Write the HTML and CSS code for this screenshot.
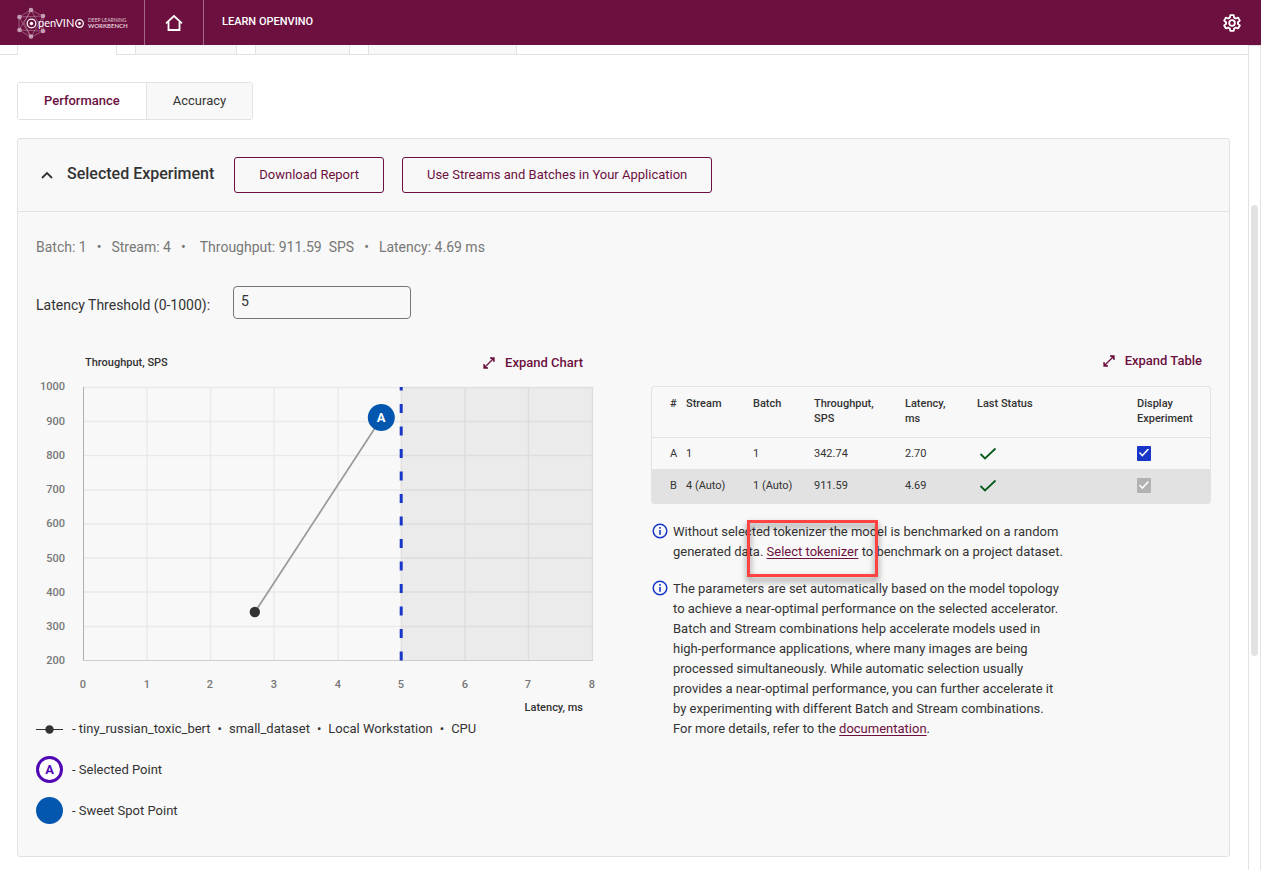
FILE: index.html
```html
<!DOCTYPE html>
<html lang="en">
<head>
<meta charset="utf-8">
<title>OpenVINO Deep Learning Workbench</title>
<link rel="stylesheet" href="styles.css">
</head>
<body>
<header class="topbar">
  <a class="brand" href="#" aria-label="OpenVINO Deep Learning Workbench">
    <svg width="112" height="32" viewBox="16 6 112 32">
      <g class="mesh" fill="none">
        <path d="M31 9 19 16V29L31 36 43 30V15ZM31 9 24 22 31 36M31 9 43 30M19 16 31 36 43 15M19 29 31 9M19 29 43 30M19 16 43 15"/>
      </g>
      <g class="mesh-node">
        <circle cx="31" cy="9" r="2.300"/><circle cx="19.500" cy="16" r="2.300"/><circle cx="19.500" cy="29" r="2.300"/><circle cx="31" cy="35.500" r="2.300"/><circle cx="43" cy="30" r="2.300"/><circle cx="43" cy="15" r="2.300"/>
      </g>
      <circle cx="31.500" cy="22.500" r="4.300" class="ring"/><circle cx="31.500" cy="22.500" r="1.700" fill="#fff"/>
      <text x="38" y="26" class="logo-name">penVIN</text>
      <circle cx="79.500" cy="22.500" r="3.800" class="ring"/><circle cx="79.500" cy="22.500" r="1.400" fill="#fff"/>
      <text x="88" y="21" class="logo-sub">DEEP LEARNING</text>
      <text x="88" y="27" class="logo-sub strong">WORKBENCH</text>
    </svg>
  </a>
  <a class="home" href="#" aria-label="Home">
    <svg width="20" height="18" viewBox="0 0 20 18"><path d="M2 9.300 10 2l8 7.300M4.500 8v8h11V8" fill="none" stroke="#fff" stroke-width="1.800"/></svg>
  </a>
  <a class="learn" href="#">LEARN OPENVINO</a>
  <button class="settings" aria-label="Settings">
    <svg width="20" height="20" viewBox="0 0 24 24" fill="none" stroke="#fff" stroke-width="2.200" stroke-linejoin="round"><path d="M10 2.500h4l.6 3 1.900 1.100 2.900-1 2 3.500-2.300 2v1.900l2.300 2-2 3.500-2.900-1-1.900 1.100-.6 2.900h-4l-.6-2.900-1.900-1.100-2.900 1-2-3.500 2.300-2v-1.900l-2.300-2 2-3.500 2.900 1 1.900-1.100z"/><circle cx="12" cy="12" r="3.400"/></svg>
  </button>
</header>
<div class="shell">
  <main class="content">
    <div class="stages" aria-hidden="true">
      <span class="line lead"></span><span class="stage current"></span><span class="line"></span><span class="stage s2"></span><span class="line"></span><span class="stage s3"></span><span class="line"></span><span class="stage s4"></span><span class="line rest"></span>
    </div>
    <div class="tabs" role="tablist">
      <button class="tab active" role="tab" aria-selected="true">Performance</button>
      <button class="tab" role="tab" aria-selected="false">Accuracy</button>
    </div>
    <section class="panel">
      <div class="panel-head">
        <button class="toggle" aria-label="Collapse">
          <svg width="12" height="8" viewBox="0 0 12 8"><path d="M1 7l5-5 5 5" fill="none" stroke="#333" stroke-width="1.800"/></svg>
        </button>
        <h2>Selected Experiment</h2>
        <button class="outline">Download Report</button>
        <button class="outline">Use Streams and Batches in Your Application</button>
      </div>
      <div class="panel-body">
        <div class="stats"><span>Batch: 1</span><span>•</span><span>Stream: 4</span><span>•</span><span class="through">Throughput: 911.59&nbsp; SPS</span><span>•</span><span>Latency: 4.69 ms</span></div>
        <div class="threshold">
          <label for="latency">Latency Threshold (0-1000):</label>
          <input id="latency" type="text" value="5">
        </div>
        <div class="columns">
          <div class="chart-col">
            <div class="chart-head">
              <span class="axis-title">Throughput, SPS</span>
              <button class="expand"><svg width="12" height="12" viewBox="0 0 12 12"><path d="M2 10l8-8M7 1h4v4M1 7v4h4" fill="none" stroke="#6c103f" stroke-width="1.300"/><path d="M7.500 1H11v3.500zM1 7.500V11h3.500z" fill="#6c103f"/></svg>Expand Chart</button>
            </div>
            <svg class="chart" viewBox="0 0 560 320" role="img" aria-label="Throughput against latency">
              <rect x="365" y="12" width="192" height="274" fill="#ebebeb"/>
              <path class="grid" d="M47 12.500H557M47 46.500H557M47 80.500H557M47 115H557M47 149H557M47 183H557M47 217H557M47 251.500H557M111 12V285M174.500 12V285M238 12V285M302 12V285M365 12V285M429 12V285M492.500 12V285M556.500 12V285"/>
              <path class="axis-y" d="M47.500 12V286"/><path class="axis-x" d="M47 285.500H557"/>
              <path d="M219 237 345.500 43" stroke="#999" stroke-width="1.700"/>
              <path d="M365.200 285.500V12" stroke="#1836c8" stroke-width="3" stroke-dasharray="9 13.500"/>
              <circle cx="218.800" cy="237" r="5.200" fill="#333"/>
              <circle cx="345.300" cy="42.500" r="13.500" fill="#0457ae"/>
              <text x="345" y="47" class="point">A</text>
              <g class="tick end">
                <text x="29" y="15">1000</text><text x="29" y="50">900</text><text x="29" y="84">800</text><text x="29" y="118">700</text><text x="29" y="152">600</text><text x="29" y="187">500</text><text x="29" y="221">400</text><text x="29" y="255">300</text><text x="29" y="289">200</text>
              </g>
              <g class="tick mid">
                <text x="47" y="313">0</text><text x="111" y="313">1</text><text x="174" y="313">2</text><text x="238" y="313">3</text><text x="302" y="313">4</text><text x="365" y="313">5</text><text x="429" y="313">6</text><text x="492" y="313">7</text><text x="556" y="313">8</text>
              </g>
            </svg>
            <div class="x-title axis-title">Latency, ms</div>
            <ul class="legend">
              <li><svg width="27" height="10" viewBox="0 0 27 10"><path d="M0 5.500h27" stroke="#333"/><circle cx="13.500" cy="5.500" r="4.200" fill="#333"/></svg><span class="names"><span>- tiny_russian_toxic_bert</span><span>•</span><span>small_dataset</span><span>•</span><span>Local Workstation</span><span>•</span><span>CPU</span></span></li>
              <li><span class="dot selected">A</span><span>- Selected Point</span></li>
              <li><span class="dot sweet"></span><span>- Sweet Spot Point</span></li>
            </ul>
          </div>
          <div class="table-col">
            <div class="table-head">
              <button class="expand"><svg width="12" height="12" viewBox="0 0 12 12"><path d="M2 10l8-8M7 1h4v4M1 7v4h4" fill="none" stroke="#6c103f" stroke-width="1.300"/><path d="M7.500 1H11v3.500zM1 7.500V11h3.500z" fill="#6c103f"/></svg>Expand Table</button>
            </div>
            <div class="table-wrap">
            <table>
              <colgroup><col class="c-id"><col class="c-stream"><col class="c-batch"><col class="c-thr"><col class="c-lat"><col class="c-status"><col></colgroup>
              <thead><tr><th>#</th><th>Stream</th><th>Batch</th><th>Throughput, SPS</th><th>Latency, ms</th><th>Last Status</th><th>Display Experiment</th></tr></thead>
              <tbody>
                <tr><td>A</td><td>1</td><td>1</td><td>342.74</td><td>2.70</td><td><svg class="ok" width="18" height="14" viewBox="0 0 18 14"><path d="M1.500 7l4.500 4.500L16.500 1.500" fill="none" stroke="#0b5a1d" stroke-width="1.800"/></svg></td><td><input type="checkbox" checked aria-label="Display experiment A"></td></tr>
                <tr class="picked"><td>B</td><td>4 (Auto)</td><td>1 (Auto)</td><td>911.59</td><td>4.69</td><td><svg class="ok" width="18" height="14" viewBox="0 0 18 14"><path d="M1.500 7l4.500 4.500L16.500 1.500" fill="none" stroke="#0b5a1d" stroke-width="1.800"/></svg></td><td><input type="checkbox" checked disabled aria-label="Display experiment B"></td></tr>
              </tbody>
            </table>
            </div>
            <div class="note">
              <svg width="16" height="16" viewBox="0 0 16 16"><circle cx="8" cy="8" r="6.800" fill="none" stroke="#1836c8" stroke-width="1.500"/><path d="M8 7v4.800M8 4v1.800" stroke="#1836c8" stroke-width="1.600"/></svg>
              <p>Without selected tokenizer the model is benchmarked on a random generated data. <a href="#">Select tokenizer</a> to benchmark on a project dataset.</p>
              <span class="highlight"></span>
            </div>
            <div class="note">
              <svg width="16" height="16" viewBox="0 0 16 16"><circle cx="8" cy="8" r="6.800" fill="none" stroke="#1836c8" stroke-width="1.500"/><path d="M8 7v4.800M8 4v1.800" stroke="#1836c8" stroke-width="1.600"/></svg>
              <p>The parameters are set automatically based on the model topology to achieve a near-optimal performance on the selected accelerator. Batch and Stream combinations help accelerate models used in high-performance applications, where many images are being processed simultaneously. While automatic selection usually provides a near-optimal performance, you can further accelerate it by experimenting with different Batch and Stream combinations.<br>For more details, refer to the <a href="#">documentation</a>.</p>
            </div>
          </div>
        </div>
      </div>
    </section>
  </main>
  <div class="scroll-track" aria-hidden="true"><span class="scroll-thumb"></span></div>
</div>
</body>
</html>
```
FILE: styles.css
```css
* { box-sizing: border-box; }
body {
  margin: 0;
  min-height: 100vh;
  display: flex;
  flex-direction: column;
  background: #fff;
  color: #333;
  font: 13px/20px Roboto, "Liberation Sans", sans-serif;
}
button, input { font: inherit; color: inherit; margin: 0; }
button { background: none; border: 0; padding: 0; cursor: pointer; }

.topbar { height: 45px; display: flex; align-items: stretch; background: #6c103f; color: #fff; }
.topbar a, .settings { display: flex; align-items: center; color: #fff; text-decoration: none; }
.brand { padding: 0 16px; border-right: 1px solid #a1688a; }
.home { width: 59px; justify-content: center; border-right: 1px solid #a1688a; }
.learn { padding: 0 18px 1px; font-size: 11px; font-weight: 500; }
.settings { margin-left: auto; padding-right: 19px; }
.mesh { stroke: #b98aa3; stroke-width: 0.6; }
.mesh-node { fill: #c79db3; }
.ring { fill: none; stroke: #fff; stroke-width: 1.3; }
.logo-name { font: 11px Lato, sans-serif; fill: #fff; }
.logo-sub { font: 5px Lato, sans-serif; fill: #e0c8d4; }
.logo-sub.strong { font-size: 6px; font-weight: 700; }

.shell { flex: 1; display: flex; }
.content { flex: 1; min-width: 0; padding-bottom: 13px; }
.scroll-track { width: 13px; border: 1px solid #e2e2e2; border-bottom: 0; padding: 159px 2px 0; }
.scroll-thumb { display: block; height: 451px; border-radius: 4px; background: #e2e2e2; }

.stages { display: flex; height: 10px; }
.line { width: 18px; border-bottom: 1px solid #e2e2e2; }
.lead { width: 17px; }
.rest { flex: 1; }
.stage { border: 1px solid #e2e2e2; border-top: 0; background: #f8f8f8; width: 102px; }
.current { width: 100px; background: #fff; border-bottom: 0; }
.s3 { width: 95px; }
.s4 { width: 149px; }

.tabs { display: flex; width: fit-content; margin: 27px 0 18px 17px; border: 1px solid #e2e2e2; border-radius: 3px; }
.tab { height: 36px; padding: 0 26px; background: #f8f8f8; border-radius: 0 2px 2px 0; }
.tab.active { background: #fff; color: #6c103f; font-weight: 500; border-right: 1px solid #e2e2e2; border-radius: 2px 0 0 2px; }

.panel { margin: 0 18px 0 17px; border: 1px solid #e2e2e2; border-radius: 3px; background: #f8f8f8; }
.panel-head { display: flex; align-items: center; gap: 18px; padding: 18px; border-bottom: 1px solid #e2e2e2; }
.toggle { width: 12px; height: 36px; margin-left: 5px; margin-right: -4px; display: flex; align-items: center; justify-content: center; }
h2 { margin: 0 2px 0 0; padding-bottom: 2px; font-size: 16px; line-height: 24px; font-weight: 500; }
.outline { height: 36px; padding: 0 24px; border: 1px solid #6c103f; border-radius: 3px; color: #6c103f; }
.panel-body { padding: 25px 18px 32px; }
.stats { display: flex; gap: 10px; font-size: 14px; color: #777; }
.through { margin-left: 4px; }
.threshold { display: flex; align-items: center; gap: 23px; margin-top: 29px; font-size: 14px; }
.threshold label { padding-top: 4px; }
.threshold input { width: 178px; height: 33px; padding: 0 7px 3px; border: 1px solid #777; border-radius: 4px; background: #f8f8f8; outline: 0; }

.columns { display: grid; grid-template-columns: 1fr 1fr; gap: 55px; margin-top: 31px; }
.chart-head { display: flex; justify-content: space-between; align-items: center; height: 25px; padding: 0 13px 0 49px; }
.axis-title { font-size: 11px; font-weight: 500; }
.expand { display: flex; align-items: center; gap: 10px; color: #6c103f; font-weight: 500; }
.chart { display: block; width: 100%; }
.grid { stroke: #000; stroke-opacity: 0.06; stroke-width: 1.4; fill: none; }
.axis-y { stroke: #b0b0b0; }
.axis-x { stroke: #ccc; }
.tick { font-size: 11px; font-weight: 500; fill: #777; }
.end { text-anchor: end; }
.mid, .point { text-anchor: middle; }
.point { font-size: 13px; font-weight: 700; fill: #fff; }
.x-title { text-align: right; line-height: 18px; padding: 4px 13px 0 0; }
.legend { list-style: none; margin: 0; padding: 0; display: grid; gap: 14px; }
.legend li { display: flex; align-items: center; gap: 9px; height: 27px; }
.legend li:first-child { height: 23px; margin-bottom: 2px; }
.names { display: flex; gap: 7px; }
.dot { width: 27px; height: 27px; border-radius: 50%; text-align: center; font-weight: 700; line-height: 21px; }
.selected { border: 3px solid #5106b5; background: #fff; color: #5106b5; }
.sweet { background: #0457ae; }

.table-head { display: flex; justify-content: flex-end; padding: 1px 9px 0 0; height: 36px; align-items: flex-start; }
.table-wrap { border: 1px solid #e2e2e2; border-radius: 3px; overflow: hidden; }
table { width: 100%; border-collapse: collapse; table-layout: fixed; font-size: 11px; line-height: 15px; }
th, td { padding: 0; text-align: left; vertical-align: top; }
th { font-weight: 500; height: 50px; padding-top: 9px; border-bottom: 1px solid #e2e2e2; }
th:first-child, td:first-child { padding-left: 18px; }
th:nth-child(4), th:nth-child(5) { padding-right: 28px; }
td { height: 32px; padding-top: 8px; }
.picked { background: #e2e2e2; }
.picked td { height: 34px; padding-top: 9px; }
.c-id { width: 34px; }
.c-stream { width: 67px; }
.c-batch { width: 61px; }
.c-thr { width: 91px; }
.c-lat { width: 72px; }
.c-status { width: 160px; }
.ok { display: block; margin-left: 2px; margin-top: 1px; }
input[type="checkbox"] { appearance: none; display: block; width: 14px; height: 15px; background: #1836c8; border-radius: 1px; padding: 3px 2px; }
input[type="checkbox"]::before { content: ""; display: block; width: 10px; height: 9px; background: #fff; clip-path: polygon(0 50%, 11% 40%, 33% 68%, 89% 0, 100% 10%, 33% 92%); }
input[type="checkbox"]:disabled { background: #b2b2b2; }

.note { position: relative; display: flex; gap: 5px; margin-top: 17px; }
.note svg { flex: none; margin: 1px 0 0 1px; }
.note p { margin: 0; width: 392px; }
.note a { color: #6c103f; text-underline-offset: 2px; }
.table-wrap + .note { margin-top: 18px; }
.highlight { position: absolute; left: 96px; top: -2px; width: 131px; height: 57px; border: 3px solid #ff4343; filter: drop-shadow(0 4px 3px rgba(0, 0, 0, 0.5)); pointer-events: none; }
```
